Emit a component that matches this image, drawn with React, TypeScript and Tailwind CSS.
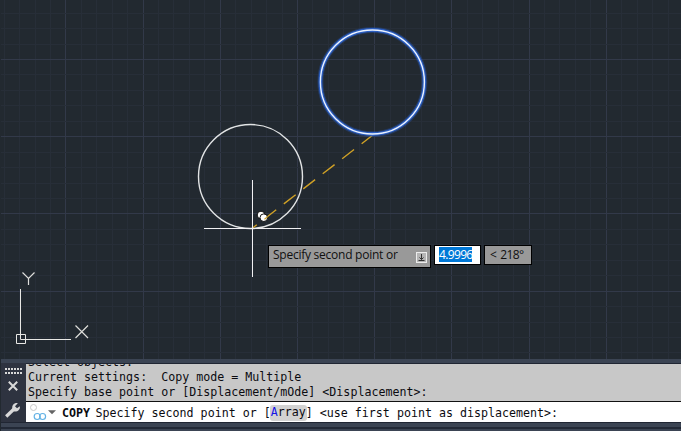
import React from "react";

const STEP = 15.44;
const lines = (first: number, limit: number, majorIndex: number) => {
  const out: { at: number; major: boolean }[] = [];
  for (let i = 0; first + i * STEP < limit; i++) {
    out.push({ at: Math.floor(first + i * STEP) + 0.5, major: i % 5 === majorIndex });
  }
  return out;
};
const columns = lines(4.15, 681, 4);
const rows = lines(13.2, 359, 3);

function Drawing() {
  return (
    <svg className="block h-[359px] w-[681px]" viewBox="0 0 681 359" fill="none">
      {columns.map((l) => (
        <path key={l.at} d={`M${l.at} 0V359`} stroke={l.major ? "#323949" : "#272e38"} />
      ))}
      {rows.map((l) => (
        <path key={l.at} d={`M1 ${l.at}H681`} stroke={l.major ? "#323949" : "#272e38"} />
      ))}
      <path d="M373.5 134.5L252 228.5" stroke="#d0a126" strokeWidth="1.4" strokeDasharray="15 9.6" />
      <circle cx="372.4" cy="82" r="52" stroke="#2455b5" strokeOpacity=".35" strokeWidth="6" />
      <circle cx="372.4" cy="82" r="52" stroke="#2b62cc" strokeOpacity=".9" strokeWidth="3.8" />
      <circle cx="372.4" cy="82" r="52" stroke="#eaf2ff" strokeWidth="1.4" />
      <circle cx="250.5" cy="176.5" r="52" stroke="#e2e4e5" strokeWidth="1.4" />
      <path d="M252.5 180V277M204 228.5H301" stroke="#f1f1f3" />
      <circle cx="261" cy="215" r="3.8" fill="#fff" stroke="#000" strokeWidth=".9" />
      <circle cx="263.8" cy="217.7" r="3.8" fill="#fff" stroke="#000" strokeWidth=".9" />
      <path d="M264.5 219.2L268 216.4" stroke="#d0a126" strokeWidth="1.2" />
      <path d="M20.5 289V339.5H71M16.5 334.5H25.5V343.5H16.5Z" stroke="#e8e8e5" />
      <path d="M22.5 272.5L28.5 278.5L34.5 272.5M28.5 278.5V285M75.5 325.5L88 338M88 325.5L75.5 338" stroke="#dededb" strokeWidth="1.2" />
    </svg>
  );
}

function DynamicInput() {
  return (
    <div className="absolute left-[268px] top-[245px] flex items-start gap-[3px] font-['Open_Sans','Noto_Sans',sans-serif] text-[12px] leading-[18px] text-[#101010]">
      <div className="flex h-[23px] w-[163px] justify-between border border-black bg-[#999] pl-1 pr-[3px]">
        <span className="whitespace-nowrap tracking-[-0.25px]">Specify second point or</span>
        <svg className="mt-1.5 h-[11px] w-[11px] shrink-0" viewBox="0 0 11 11" fill="none">
          <rect x=".5" y=".5" width="10" height="10" fill="#b5b5b5" stroke="#ececec" />
          <path d="M5.5 2V7.5M3.5 5.5L5.5 7.5L7.5 5.5M2.5 8.5H8.5" stroke="#333" />
        </svg>
      </div>
      <div className="h-[20px] w-[47px] border border-black bg-white pl-1">
        <span className="block h-[15px] w-[33px] translate-y-px whitespace-nowrap bg-[#0078d7] leading-[15px] tracking-[-0.65px] text-white">4.9996</span>
      </div>
      <div className="h-[20px] w-[48px] whitespace-nowrap border border-black bg-[#999] pl-[5px] tracking-[-0.6px]">&lt;<span className="pl-1">218°</span></div>
    </div>
  );
}

function Toolbar() {
  return (
    <div className="flex w-[25px] shrink-0 flex-col bg-[#2e3340]">
      <svg className="h-[59px] w-[25px]" viewBox="1 363 25 59" fill="none">
        <path d="M5 369H22M5 373H22" stroke="#d9d9d9" strokeWidth="2" strokeDasharray="2 1" />
        <path d="M8.8 381.8L17.2 390.2M17.2 381.8L8.8 390.2" stroke="#d9d9d9" strokeWidth="2" />
        <path d="M6.2 416.5L14 409" stroke="#d9d9d9" strokeWidth="3.2" />
        <path d="M17.8 403.2C14.5 402.5 12 405 12.3 408L12.2 409.5L14.2 411.5C17.5 412 20.5 409.8 19.8 406.3L17 408.3L15 406.2Z" fill="#d9d9d9" />
      </svg>
    </div>
  );
}

function CommandLine() {
  return (
    <div className="font-['DejaVu_Sans_Mono',monospace] text-[11.65px] leading-[15px] text-[#0b0b10]">
      <div className="h-1 bg-[#3b4453]" />
      <div className="flex h-[60px] border-b border-[#202633]">
        <Toolbar />
        <div className="min-w-0 flex-1">
          <div className="flex h-[38px] flex-col justify-end overflow-hidden border-t border-[#202633] bg-[#c8c8c8] pb-px pl-0.5">
            <div className="whitespace-pre">Select objects:</div>
            <div className="whitespace-pre">Current settings:  Copy mode = Multiple</div>
            <div className="whitespace-pre">Specify base point or [Displacement/mOde] &lt;Displacement&gt;:</div>
          </div>
          <div className="flex h-[21px] items-center whitespace-pre border-t border-[#111] bg-white">
            <svg className="h-5 w-9 shrink-0" viewBox="26 402 36 20" fill="none">
              <circle cx="33.5" cy="407.5" r="3" stroke="#c9c9c9" />
              <circle cx="37.2" cy="416.5" r="3" stroke="#63b2e5" strokeWidth="1.2" />
              <circle cx="42.6" cy="416.5" r="3" stroke="#63b2e5" strokeWidth="1.2" />
              <path d="M48 410.2H56L52 414.3Z" fill="#646464" />
            </svg>
            <div className="flex translate-y-px items-center">
              <b className="w-[33.5px]">COPY</b>
              <span>Specify second point or [</span>
              <span className="-mx-px -my-px rounded-[3px] bg-[#d2d2d2] px-px pb-px"><span className="text-[#1414e6]">A</span>rray</span>
              <span>] &lt;use first point as displacement&gt;:</span>
            </div>
          </div>
        </div>
      </div>
      <div className="h-1 bg-[#3b4453]" />
      <div className="h-[2px] bg-[#222936]" />
      <div className="h-0.5 bg-[#3b4453]" />
    </div>
  );
}

export default function App() {
  return (
    <div className="h-[431px] w-[681px] overflow-hidden bg-[#222930]">
      <div className="relative h-[359px]">
        <Drawing />
        <DynamicInput />
      </div>
      <div className="pl-px">
        <CommandLine />
      </div>
    </div>
  );
}
